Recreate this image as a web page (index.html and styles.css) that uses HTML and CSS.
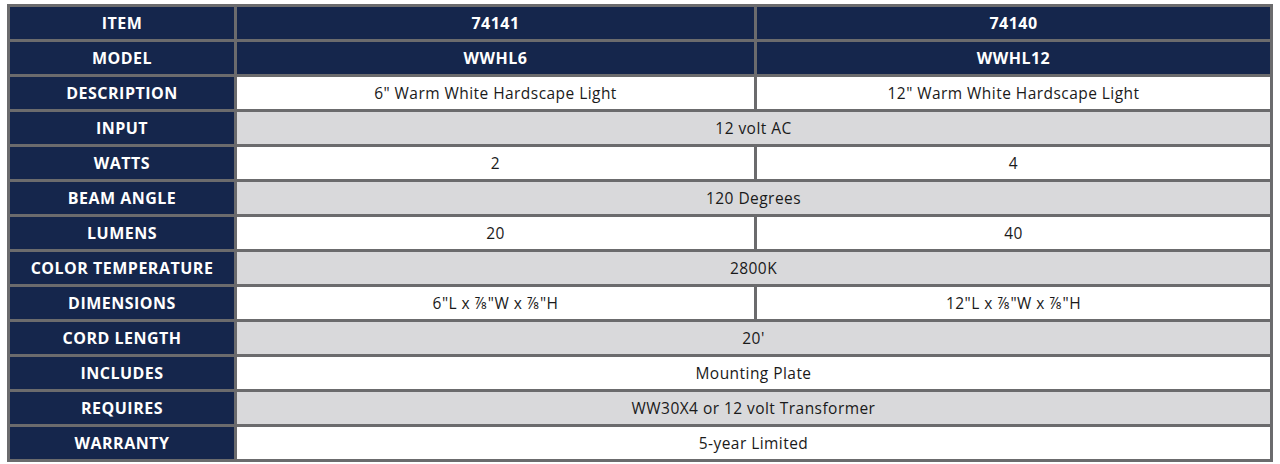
FILE: index.html
```html
<!DOCTYPE html>
<html lang="en">
<head>
<meta charset="utf-8">
<title>Specifications</title>
<link rel="stylesheet" href="styles.css">
</head>
<body>
<div class="wrap">
<table class="spec">
<colgroup><col class="c1"><col class="c2"><col class="c3"></colgroup>
<tbody>
<tr class="hd"><th>ITEM</th><td>74141</td><td>74140</td></tr>
<tr class="hd"><th>MODEL</th><td>WWHL6</td><td>WWHL12</td></tr>
<tr class="w"><th>DESCRIPTION</th><td>6" Warm White Hardscape Light</td><td>12" Warm White Hardscape Light</td></tr>
<tr class="g"><th>INPUT</th><td colspan="2">12 volt AC</td></tr>
<tr class="w"><th>WATTS</th><td>2</td><td>4</td></tr>
<tr class="g"><th>BEAM ANGLE</th><td colspan="2">120 Degrees</td></tr>
<tr class="w"><th>LUMENS</th><td>20</td><td>40</td></tr>
<tr class="g"><th>COLOR TEMPERATURE</th><td colspan="2">2800K</td></tr>
<tr class="w"><th>DIMENSIONS</th><td>6"L x ⅞"W x ⅞"H</td><td>12"L x ⅞"W x ⅞"H</td></tr>
<tr class="g"><th>CORD LENGTH</th><td colspan="2">20'</td></tr>
<tr class="w"><th>INCLUDES</th><td colspan="2">Mounting Plate</td></tr>
<tr class="g"><th>REQUIRES</th><td colspan="2">WW30X4 or 12 volt Transformer</td></tr>
<tr class="w"><th>WARRANTY</th><td colspan="2">5-year Limited</td></tr>
</tbody>
</table>
</div>
</body>
</html>
```
FILE: styles.css
```css
html, body { margin: 0; padding: 0; background: #ffffff; }
.wrap { padding: 4px 0 0 7px; }
.spec {
  width: 1266px;
  table-layout: fixed;
  border-collapse: collapse;
  font-family: "Open Sans", "Liberation Sans", sans-serif;
}
.c1 { width: 227px; }
.c2 { width: 520px; }
.spec th, .spec td {
  border: 3px solid #6b6b6d;
  height: 35px;
  padding: 0;
  text-align: center;
  vertical-align: middle;
  box-sizing: border-box;
}
.spec th {
  background: #15264c;
  color: #ffffff;
  font-weight: 700;
  font-size: 16px;
  letter-spacing: 0.5px;
}
.spec td {
  font-size: 15.5px;
  letter-spacing: 0.45px;
  color: #1a1a1a;
}
.hd td { background: #15264c; color: #ffffff; font-weight: 700; font-size: 16px; letter-spacing: 0.5px; }
.w td { background: #ffffff; }
.g td { background: #d9d9db; }
```
